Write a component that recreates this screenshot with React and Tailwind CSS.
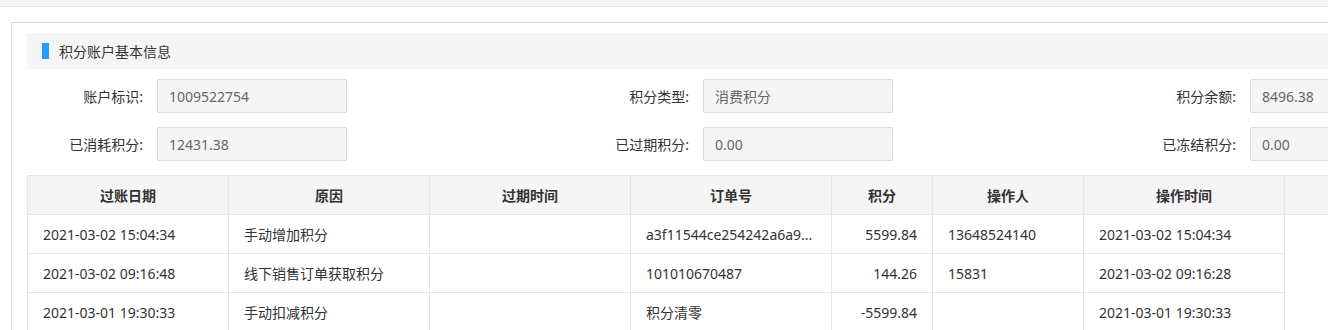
import clsx from "clsx";

const fields = [
  [
    { label: "账户标识:", value: "1009522754" },
    { label: "积分类型:", value: "消费积分" },
    { label: "积分余额:", value: "8496.38" },
  ],
  [
    { label: "已消耗积分:", value: "12431.38" },
    { label: "已过期积分:", value: "0.00" },
    { label: "已冻结积分:", value: "0.00" },
  ],
];

const columns = [
  { title: "过账日期", key: "date", w: "w-[201px]" },
  { title: "原因", key: "reason", w: "w-[201px]" },
  { title: "过期时间", key: "expire", w: "w-[201px]" },
  { title: "订单号", key: "order", w: "w-[201px]" },
  { title: "积分", key: "points", w: "w-[101px]", right: true },
  { title: "操作人", key: "operator", w: "w-[151px]" },
  { title: "操作时间", key: "time", w: "w-[201px]" },
];

const rows = [
  {
    date: "2021-03-02 15:04:34",
    reason: "手动增加积分",
    expire: "",
    order: "a3f11544ce254242a6a9...",
    points: "5599.84",
    operator: "13648524140",
    time: "2021-03-02 15:04:34",
  },
  {
    date: "2021-03-02 09:16:48",
    reason: "线下销售订单获取积分",
    expire: "",
    order: "101010670487",
    points: "144.26",
    operator: "15831",
    time: "2021-03-02 09:16:28",
  },
  {
    date: "2021-03-01 19:30:33",
    reason: "手动扣减积分",
    expire: "",
    order: "积分清零",
    points: "-5599.84",
    operator: "",
    time: "2021-03-01 19:30:33",
  },
];

export default function App() {
  return (
    <div className="w-[1328px] h-[330px] overflow-hidden bg-white text-[14px] text-[#333] font-['Noto_Sans','Noto_Sans_CJK_SC',sans-serif]">
      <div className="h-[7px] bg-[#f5f5f5] border-b border-[#e6e6e6]" />
      <div className="pt-[15px] pl-[11px]">
        <div className="w-[1720px] border-t border-l border-[#dddddd] pt-[10px] pl-[15px]">
          <div className="h-[36px] bg-[#f5f5f5] flex items-center pl-[15px]">
            <span className="w-[7px] h-[16px] bg-[#1e9fff]" />
            <span className="ml-[10px]">积分账户基本信息</span>
          </div>

          <div className="mt-[10px] flex flex-col gap-[14px]">
            {fields.map((row, i) => (
              <div key={i} className="flex">
                {row.map((f, j) => (
                  <div key={f.label} className={clsx("flex items-center", j === 0 ? "w-[546px]" : "w-[547px]")}>
                    <label className="w-[116px] mr-[14px] text-right">{f.label}</label>
                    <div className="w-[190px] h-[34px] flex items-center px-[11px] bg-[#f5f5f5] border border-[#dddddd] rounded-[2px] text-[#666]">
                      {f.value}
                    </div>
                  </div>
                ))}
              </div>
            ))}
          </div>

          <div className="mt-[14px] border-t border-l border-[#e6e6e6]">
            <div className="flex h-[39px] bg-[#f5f5f5] border-b border-[#e6e6e6]">
              {columns.map((c) => (
                <div key={c.key} className={clsx(c.w, "shrink-0 flex items-center justify-center border-r border-[#e6e6e6] font-bold")}>
                  {c.title}
                </div>
              ))}
              <div className="flex-1" />
            </div>
            {rows.map((r, i) => (
              <div key={i} className="flex h-[39px] bg-white">
                {columns.map((c) => (
                  <div
                    key={c.key}
                    className={clsx(
                      c.w,
                      "shrink-0 flex items-center px-[15px] border-r border-b border-[#e6e6e6] whitespace-nowrap overflow-hidden",
                      c.right && "justify-end"
                    )}
                  >
                    {r[c.key]}
                  </div>
                ))}
              </div>
            ))}
          </div>
        </div>
      </div>
    </div>
  );
}
